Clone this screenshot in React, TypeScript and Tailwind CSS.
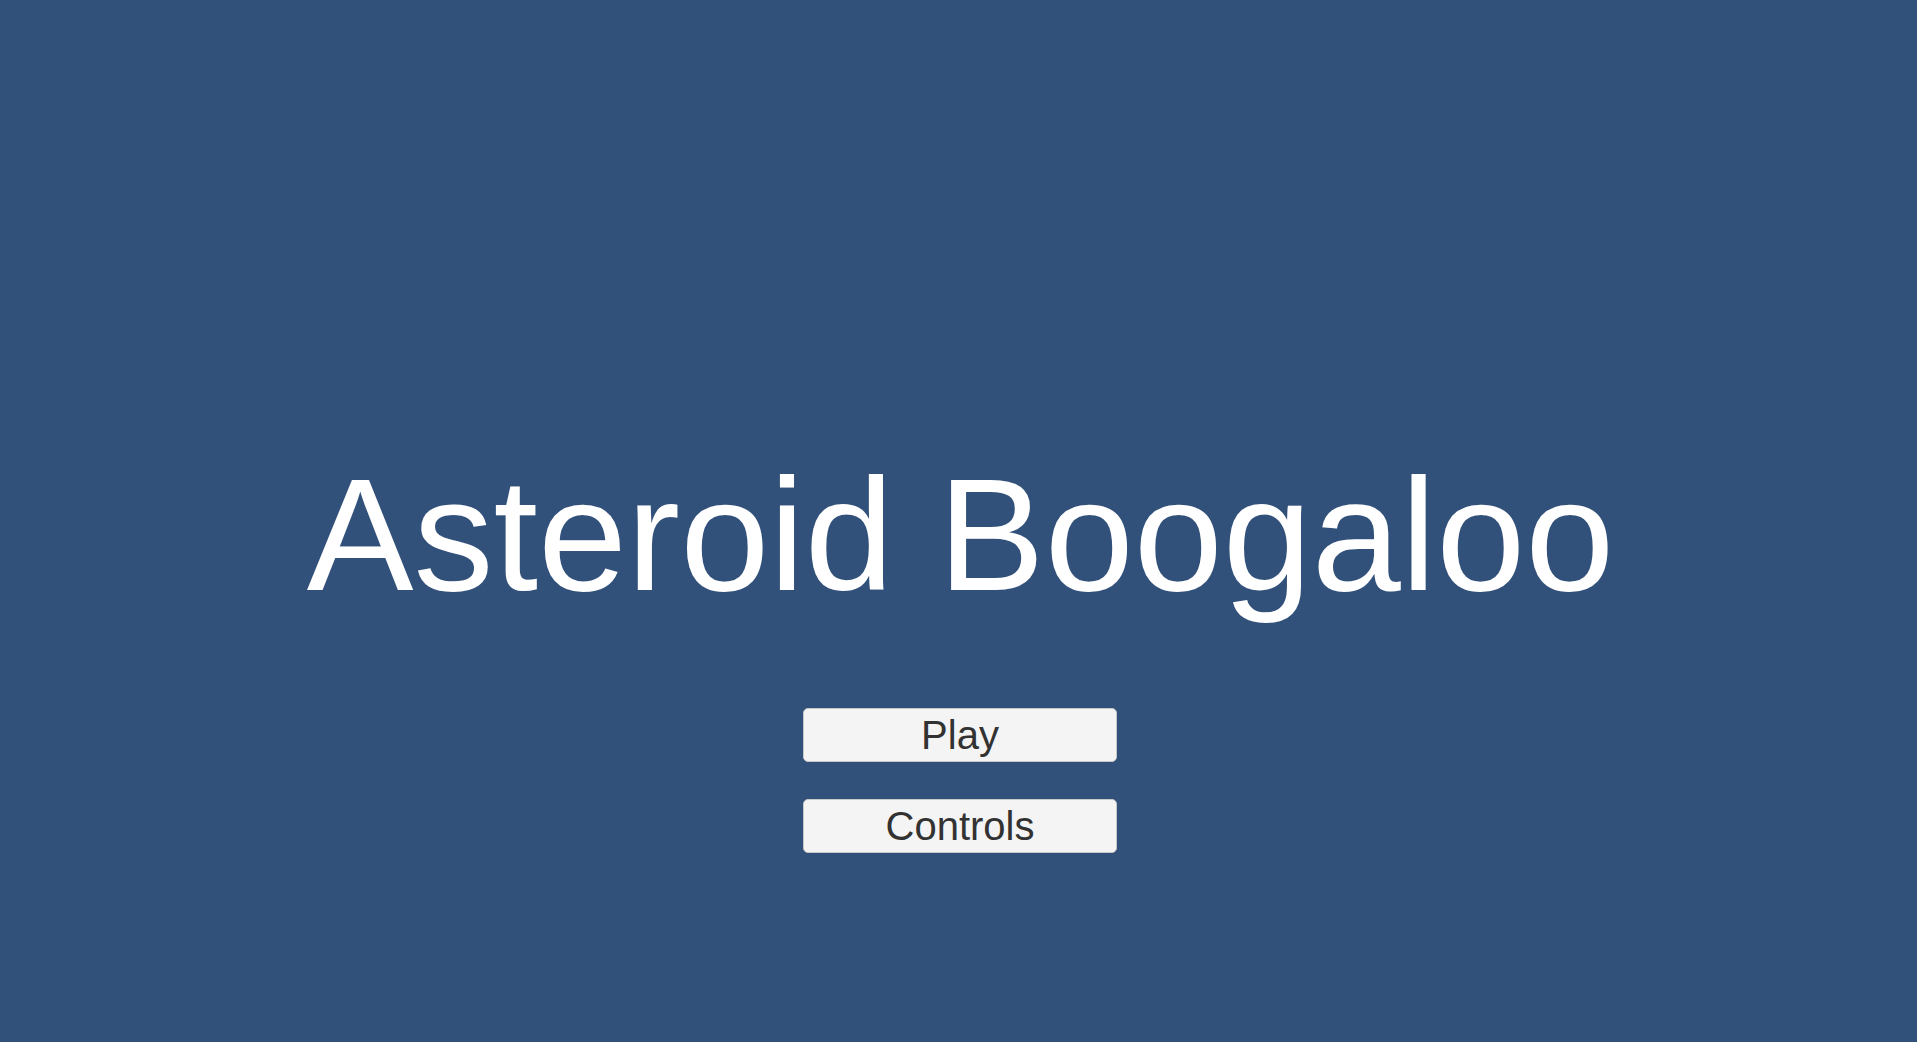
import React from "react";

const MenuButton = ({ label }: { label: string }) => (
  <button className="w-[314px] h-[54px] flex items-center justify-center rounded-[5px] bg-[#f4f4f4] border border-[#c8c8c8] text-[#323232] text-[40px] leading-none font-['Liberation_Sans',Arial,sans-serif]">
    {label}
  </button>
);

const App = () => {
  return (
    <div className="w-full h-screen bg-[#31507a] flex flex-col items-center pt-[455px] font-['Liberation_Sans',Arial,sans-serif] overflow-hidden">
      <h1 className="text-white text-[160px] leading-none pl-[4px]">Asteroid Boogaloo</h1>
      <div className="flex flex-col items-center gap-[37px] mt-[93px] pl-[3px]">
        <MenuButton label="Play" />
        <MenuButton label="Controls" />
      </div>
    </div>
  );
};

export default App;
